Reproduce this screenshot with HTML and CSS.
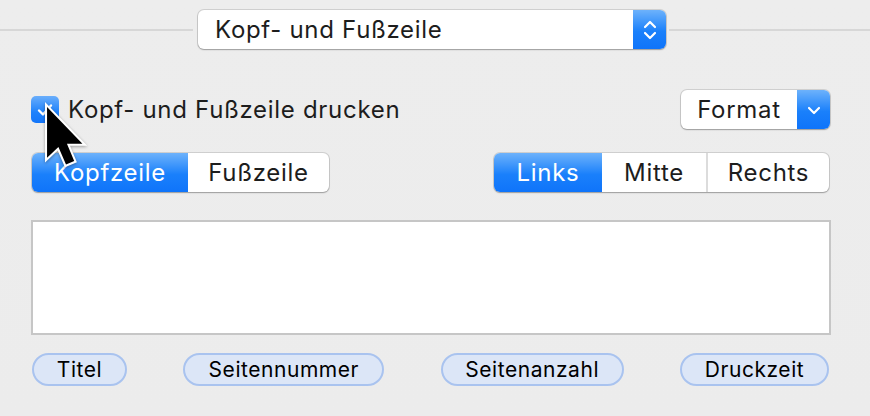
FILE: index.html
```html
<!DOCTYPE html>
<html lang="de">
<head>
<meta charset="utf-8">
<title>Kopf- und Fußzeile</title>
<link rel="stylesheet" href="styles.css">
</head>
<body>
<div class="panel">
  <div class="header">
    <div class="rule rule-left"></div>
    <div class="popup popup-main">
      <span class="popup-label">Kopf- und Fußzeile</span>
      <span class="popup-arrows">
        <svg width="14" height="22" viewBox="0 0 14 22"><path d="M2 8 L7 3 L12 8 M2 14 L7 19 L12 14" fill="none" stroke="#fff" stroke-width="2.2" stroke-linecap="round" stroke-linejoin="round"/></svg>
      </span>
    </div>
    <div class="rule rule-right"></div>
  </div>

  <div class="content">
    <div class="row-check">
      <label class="check">
        <span class="check-box">
          <svg width="18" height="16" viewBox="0 0 18 16"><path d="M3 8.5 L7 12.5 L15 3.5" fill="none" stroke="#fff" stroke-width="2.4" stroke-linecap="round" stroke-linejoin="round"/></svg>
        </span>
        <span class="check-label">Kopf- und Fußzeile drucken</span>
      </label>
      <div class="popup popup-format">
        <span class="popup-label">Format</span>
        <span class="popup-arrows">
          <svg width="14" height="10" viewBox="0 0 14 10"><path d="M2 3 L7 8 L12 3" fill="none" stroke="#fff" stroke-width="2.2" stroke-linecap="round" stroke-linejoin="round"/></svg>
        </span>
      </div>
    </div>

    <div class="row-seg">
      <div class="seg seg-type">
        <span class="seg-item on">Kopfzeile</span>
        <span class="seg-item">Fußzeile</span>
      </div>
      <div class="seg seg-align">
        <span class="seg-item on">Links</span>
        <span class="seg-item">Mitte</span>
        <span class="seg-item">Rechts</span>
      </div>
    </div>

    <div class="field"></div>

    <div class="tokens">
      <span class="token token-titel">Titel</span>
      <span class="token token-nummer">Seitennummer</span>
      <span class="token token-anzahl">Seitenanzahl</span>
      <span class="token token-zeit">Druckzeit</span>
    </div>
  </div>

  <svg class="cursor" width="48" height="68" viewBox="-1.6 -1.6 15.2 21.5">
    <path d="M0 0 L0 16 L3.6 12.6 L6 18.2 L8.6 17.1 L6.3 11.6 L11.2 11.6 Z" fill="#000" stroke="#fff" stroke-width="1.3" stroke-linejoin="miter" paint-order="stroke"/>
  </svg>
</div>
</body>
</html>
```

FILE: styles.css
```css
html, body {
  margin: 0;
  padding: 0;
}
body {
  background: #ececec;
  font-family: "Inter", "Liberation Sans", sans-serif;
  color: #1d1d1d;
  width: 870px;
  height: 416px;
  overflow: hidden;
}
.panel {
  position: relative;
  width: 870px;
  height: 416px;
  background: linear-gradient(180deg, #ededed 0%, #ececec 100%);
}
.header {
  display: flex;
  align-items: center;
  padding-top: 10px;
}
.rule {
  height: 2px;
  background: #d7d7d7;
}
.rule-left { width: 193px; margin-right: 5px; }
.rule-right { flex: 1; margin-left: 3px; }

.popup {
  display: flex;
  height: 39px;
  background: #fff;
  border-radius: 6px;
  box-shadow: 0 0 0 1px rgba(0,0,0,0.12), 0 1px 1.5px rgba(0,0,0,0.25);
  overflow: hidden;
  box-sizing: border-box;
}
.popup-main {
  width: 468px;
}
.popup-label {
  flex: 1;
  display: flex;
  align-items: center;
  font-size: 24px;
  letter-spacing: 0.7px;
  padding-left: 17px;
}
.popup-arrows {
  width: 33px;
  display: flex;
  align-items: center;
  justify-content: center;
  background: linear-gradient(180deg, #6db2fb 0%, #1a80fb 55%, #0f74fa 100%);
}

.content {
  padding: 0 39px 0 31px;
}
.row-check {
  display: flex;
  justify-content: space-between;
  align-items: center;
  margin-top: 41px;
  padding-right: 1px;
}
.check {
  display: flex;
  align-items: center;
}
.check-box {
  width: 28px;
  height: 27px;
  border-radius: 5px;
  background: linear-gradient(180deg, #6aaefb 0%, #1f82fb 60%, #1476fa 100%);
  display: flex;
  align-items: center;
  justify-content: center;
}
.check-label {
  margin-left: 9px;
  font-size: 24px;
  letter-spacing: 0.7px;
}
.popup-format {
  width: 149px;
}
.popup-format .popup-label {
  justify-content: center;
  padding-left: 0;
}

.row-seg {
  display: flex;
  justify-content: space-between;
  margin-top: 24px;
  padding: 0 2px 0 1px;
}
.seg {
  display: flex;
  height: 39px;
  background: #fff;
  border-radius: 6px;
  box-shadow: 0 0 0 1px rgba(0,0,0,0.12), 0 1px 1.5px rgba(0,0,0,0.25);
  overflow: hidden;
}
.seg-item {
  display: flex;
  align-items: center;
  justify-content: center;
  font-size: 24px;
  letter-spacing: 0.7px;
  box-sizing: border-box;
}
.seg-item + .seg-item {
  border-left: 2px solid #dcdcdc;
}
.seg-item.on {
  color: #fff;
  background: linear-gradient(180deg, #6db2fb 0%, #1a80fb 55%, #0f74fa 100%);
}
.seg-item.on + .seg-item {
  border-left: none;
}
.seg-type .seg-item:nth-child(1) { width: 156px; }
.seg-type .seg-item:nth-child(2) { width: 141px; }
.seg-align .seg-item:nth-child(1) { width: 108px; }
.seg-align .seg-item:nth-child(2) { width: 104px; }
.seg-align .seg-item:nth-child(3) { width: 123px; }

.field {
  margin-top: 28px;
  height: 115px;
  background: #fff;
  border: 2px solid #c6c6c6;
  box-sizing: border-box;
}

.tokens {
  display: flex;
  justify-content: space-between;
  margin-top: 18px;
  padding: 0 2px 0 1px;
}
.token {
  height: 33px;
  box-sizing: border-box;
  border: 2px solid #a9c3ef;
  background: #dce6f7;
  border-radius: 17px;
  display: flex;
  align-items: center;
  justify-content: center;
  font-size: 21px;
  letter-spacing: 0.55px;
  color: #000;
}
.token-titel { width: 95px; }
.token-nummer { width: 201px; }
.token-anzahl { width: 183px; }
.token-zeit { width: 149px; }

.cursor {
  position: absolute;
  left: 42px;
  top: 102px;
  filter: drop-shadow(0 1px 1.5px rgba(0,0,0,0.35));
}
```
